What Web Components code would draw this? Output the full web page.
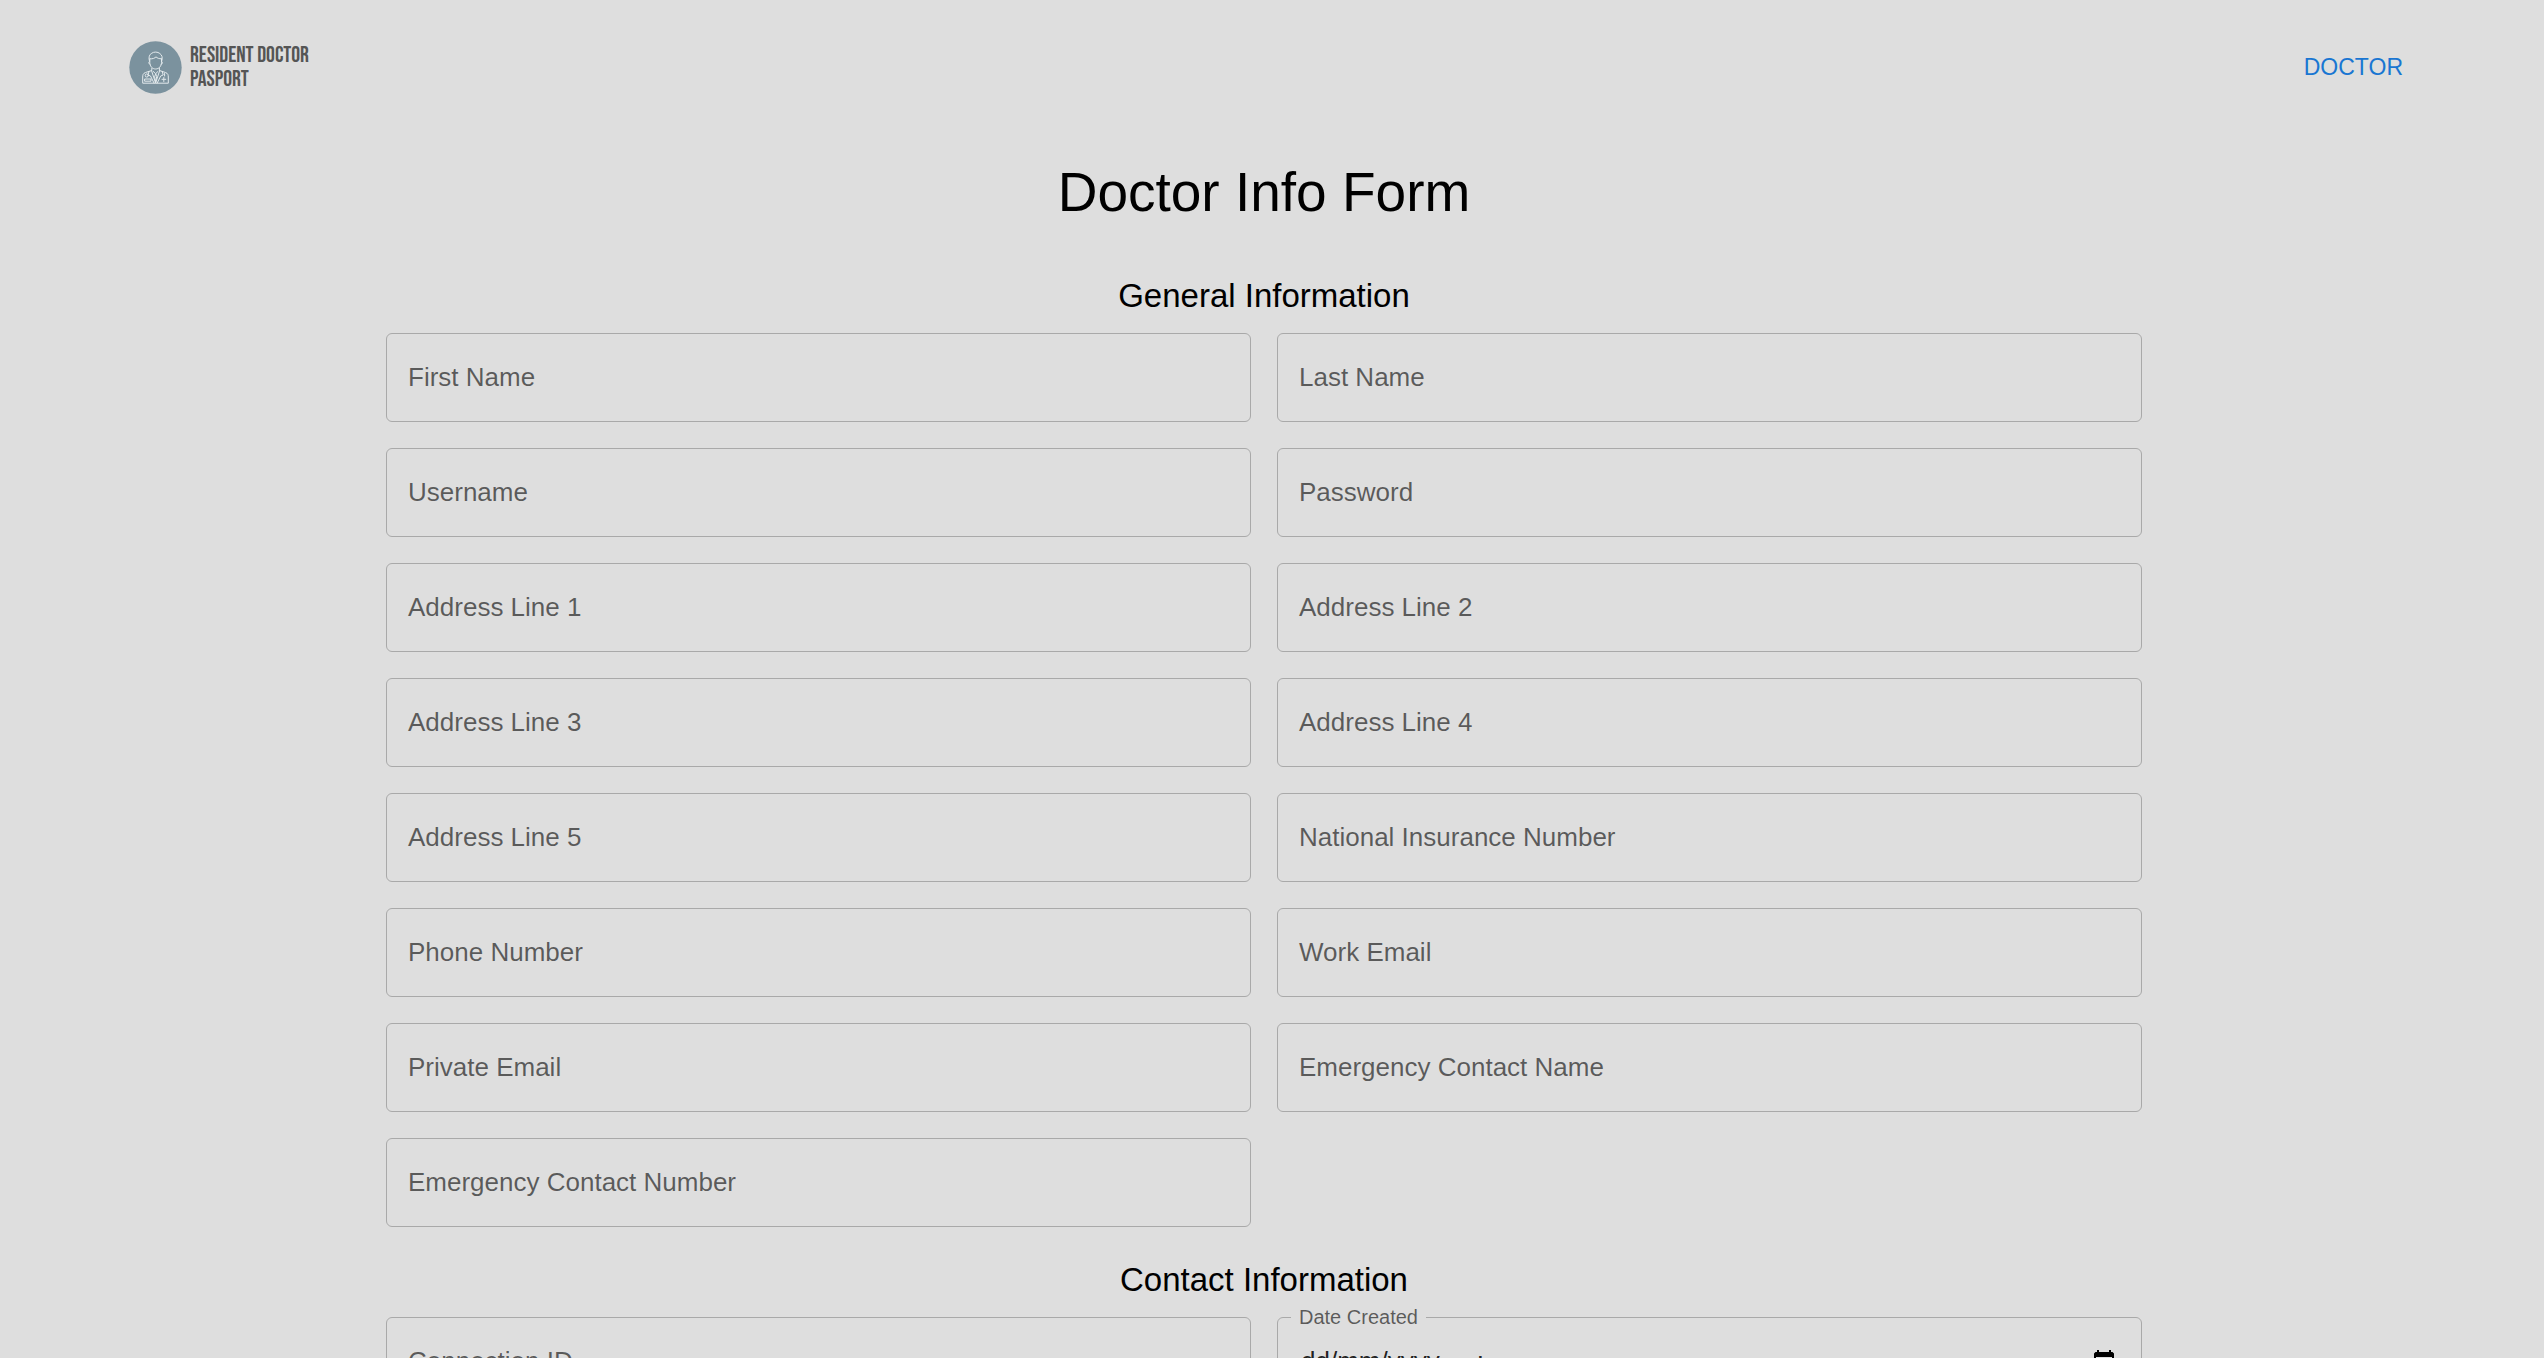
<!DOCTYPE html>
<html lang="en-GB">
<head>
<meta charset="utf-8">
<title>Doctor Info Form</title>
<style>
  html, body { margin: 0; height: 100%; background: #dedede; overflow: hidden; }
  body { font-family: "Liberation Sans", Arial, sans-serif; color: #000; }
</style>
</head>
<body>
<doctor-app></doctor-app>
<script>
  const define = (name, html, setup) => customElements.define(name, class extends HTMLElement {
    connectedCallback() {
      if (this.shadowRoot) return;
      this.attachShadow({ mode: 'open' }).innerHTML = html;
      if (setup) setup(this, this.shadowRoot);
    }
  });

  define('brand-logo', `
    <style>
      :host { display: block; }
      a { display: flex; align-items: center; gap: 8px; color: #555; text-decoration: none; }
      svg { display: block; width: 53px; height: 53px; }
      span { padding-top: 2px; font: 22px/24px "Bebas Neue", "Liberation Sans Narrow", "Liberation Sans", sans-serif; }
    </style>
    <a href="#">
      <svg viewBox="0 0 53 53" aria-hidden="true">
        <circle cx="26.5" cy="26.5" r="26.2" fill="#7b929e"/>
        <g fill="none" stroke="#e3eaed" stroke-width="1" stroke-linecap="round" stroke-linejoin="round">
          <path d="M20.3 19.5c-1-3 .2-6.300 2.500-7.300 2-1.600 6-1.500 8 .3 2.200 1.500 3 4.200 2.100 7"/>
          <path d="M20.800 17.800c3 .4 5.200-.8 6.200-2 1.200 1.400 3 2 5.500 2"/>
          <path d="M20.800 18v3.500c0 3.700 2.500 6.500 5.800 6.500s5.900-2.800 5.900-6.500V18"/>
          <path d="M20.500 20.500c-1.200 0-1 2.600.5 2.800M32.700 20.500c1.200 0 1 2.600-.5 2.800"/>
          <path d="M22.800 27.200v2.300l-6.300 2c-2.500.9-2.800 2.500-2.800 4.500v6.200h25.600V36c0-2-.3-3.600-2.800-4.500l-6.100-2v-2.300"/>
          <path d="M22.500 29.600l4.100 12.400 4.100-12.400M24.300 30.500l2.300 2.200 2.300-2.200M26.600 33l-1 3 1 5 1-5z"/>
          <path d="M20 30.500l-1 3.500 2.500 1 3.500 7M33.200 30.500l1 3.500-2.500 1-3.500 7"/>
          <circle cx="17.800" cy="34.500" r="1.600"/>
          <path d="M16 38h6v2.200h-6zM35.600 32.500v2.500M34.800 36.500v4M33 38.300h3.800"/>
        </g>
      </svg>
      <span>RESIDENT DOCTOR<br>PASPORT</span>
    </a>`);

  define('nav-bar', `
    <style>
      :host { display: block; }
      nav { display: flex; align-items: center; justify-content: space-between; height: 134px; padding: 0 115px 0 129px; }
    </style>
    <nav><slot></slot></nav>`);

  define('nav-button', `
    <style>
      :host { display: block; }
      button { border: 0; background: none; border-radius: 6px; padding: 10px; color: #1976d2; font: 23px/40px "Liberation Sans", Arial, sans-serif; cursor: pointer; }
    </style>
    <button type="button"><slot></slot></button>`);

  define('form-section', `
    <style>
      :host { display: block; padding-top: 26px; }
      h2 { margin: 0 0 11px; font-size: 33px; line-height: 53px; font-weight: 400; text-align: center; }
      .grid { display: grid; grid-template-columns: 1fr 1fr; gap: 26px; }
    </style>
    <section><h2></h2><div class="grid"><slot></slot></div></section>`,
    (el, root) => { root.querySelector('h2').textContent = el.getAttribute('heading'); });

  define('text-field', `
    <style>
      :host { display: block; }
      .field { position: relative; display: grid; align-items: center; color: rgba(0,0,0,.6); }
      input, label, button { grid-area: 1 / 1; }
      input { box-sizing: border-box; width: 100%; height: 89px; margin: 0; padding: 0 23px; border: 1px solid #a9a9a9; border-radius: 6px; background: none; color: rgba(0,0,0,.87); font: 26px "Liberation Sans", Arial, sans-serif; outline: none; }
      label { justify-self: start; margin: 0 0 1px 22px; font-size: 26px; line-height: 38px; pointer-events: none; }
      .field.float label, .field:focus-within label, input:not(:placeholder-shown) + label { position: absolute; top: -12px; left: 14px; margin: 0; padding: 0 8px; background: #dedede; font-size: 20px; line-height: 24px; }
      input:focus { border-color: #1976d2; }
      button { display: none; justify-self: end; margin-right: 26px; padding: 0; border: 0; background: none; }
      .float button { display: block; }
      svg { display: block; width: 24px; height: 24px; }
    </style>
    <div class="field">
      <input id="control" placeholder=" ">
      <label for="control"></label>
      <button type="button" aria-label="Choose date">
        <svg viewBox="0 0 24 24"><path d="M5 0h2v2h10V0h2v2h1.500L22 3.500V22H2V3.500L3.500 2H5zM4 7v13h16V7z" fill="#000" fill-rule="evenodd"/></svg>
      </button>
    </div>`,
    (el, root) => {
      root.querySelector('label').textContent = el.getAttribute('label');
      const input = root.querySelector('input');
      input.type = el.getAttribute('type') || 'text';
      if (el.hasAttribute('date')) {
        root.querySelector('.field').classList.add('float');
        input.value = 'dd/mm/yyyy,  --:--';
      }
    });

  define('doctor-app', `
    <style>
      :host { display: block; height: 100vh; overflow-y: auto; scrollbar-width: none; background: #dedede; }
      .page { padding-right: 16px; }
      main { max-width: 1756px; margin: 0 auto; padding: 26px 0; }
      h1 { margin: 0 0 19px; font-size: 55px; line-height: 64px; font-weight: 400; text-align: center; }
    </style>
    <div class="page">
      <nav-bar><brand-logo></brand-logo><nav-button>DOCTOR</nav-button></nav-bar>
      <main>
        <h1>Doctor Info Form</h1>
        <form>
          <form-section heading="General Information">
            <text-field label="First Name"></text-field>
            <text-field label="Last Name"></text-field>
            <text-field label="Username"></text-field>
            <text-field label="Password" type="password"></text-field>
            <text-field label="Address Line 1"></text-field>
            <text-field label="Address Line 2"></text-field>
            <text-field label="Address Line 3"></text-field>
            <text-field label="Address Line 4"></text-field>
            <text-field label="Address Line 5"></text-field>
            <text-field label="National Insurance Number"></text-field>
            <text-field label="Phone Number" type="tel"></text-field>
            <text-field label="Work Email" type="email"></text-field>
            <text-field label="Private Email" type="email"></text-field>
            <text-field label="Emergency Contact Name"></text-field>
            <text-field label="Emergency Contact Number" type="tel"></text-field>
          </form-section>
          <form-section heading="Contact Information">
            <text-field label="Connection ID"></text-field>
            <text-field label="Date Created" date></text-field>
          </form-section>
        </form>
      </main>
    </div>`);
</script>
</body>
</html>
